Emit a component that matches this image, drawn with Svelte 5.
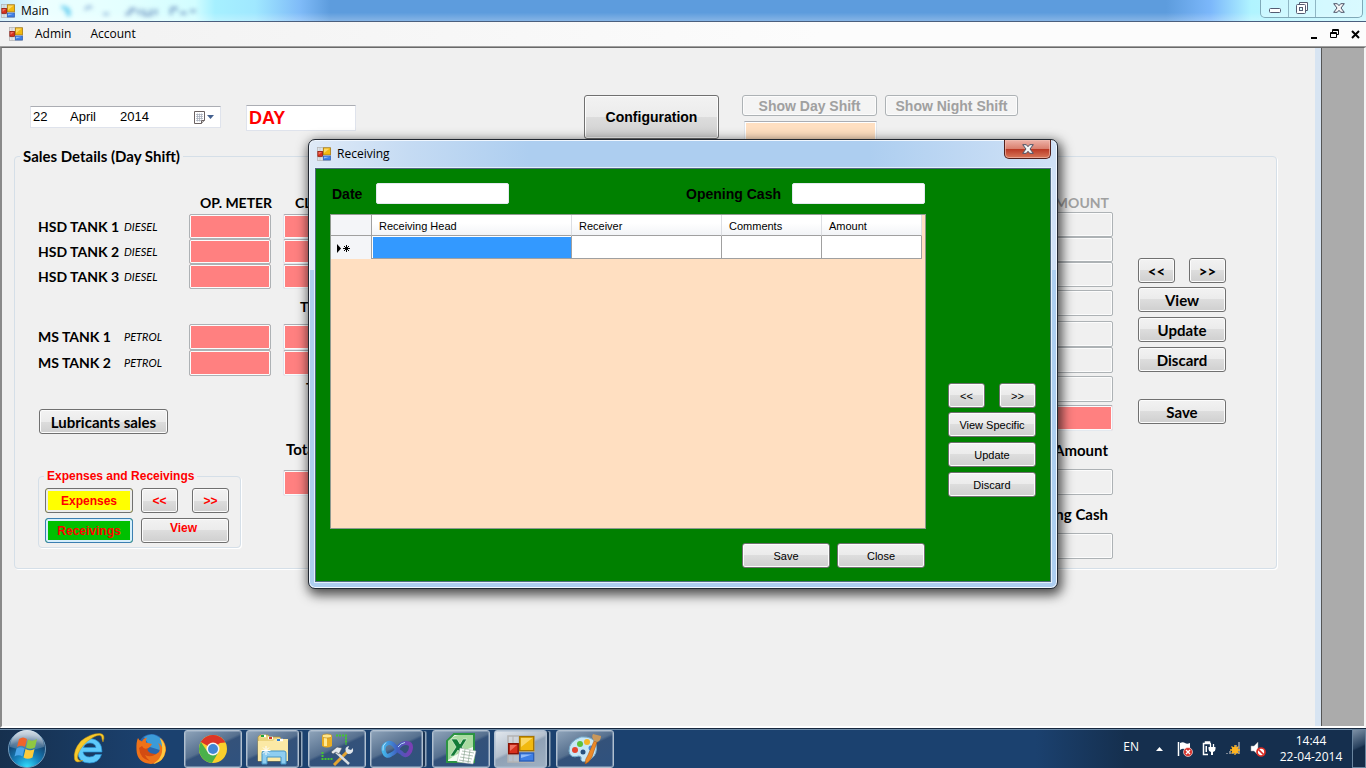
<script>
  const hsd = ['HSD TANK 1', 'HSD TANK 2', 'HSD TANK 3'];
  const ms = ['MS TANK 1', 'MS TANK 2'];
  const columns = ['Receiving Head', 'Receiver', 'Comments', 'Amount'];
  let date = $state('');
  let openingCash = $state('');
  let shift = $state('DAY');
</script>

{#snippet formIcon(size)}
  <svg class="icon" width={size} height={size} viewBox="0 0 28 28" aria-hidden="true">
    <rect x="1" y="1" width="26" height="26" fill="#dcdcdc" fill-opacity=".5" stroke="#b4b4b4" stroke-width="1.5" />
    <path d="M6 1v26M1 20h26M12 1v26" stroke="#b4b4b4" stroke-width="1" />
    <rect x="12.7" y="1.7" width="14" height="14" fill="#f2b90f" stroke="#a87600" stroke-width="1.4" />
    <path d="M14 3h11.5L14 12z" fill="#ffe48a" fill-opacity=".7" />
    <rect x="1.7" y="8.7" width="9.5" height="10" fill="#d8301c" stroke="#861105" stroke-width="1.4" />
    <path d="M3 10h7l-7 6z" fill="#ff9d8c" fill-opacity=".6" />
    <rect x="12.7" y="18" width="14" height="8" fill="#3e7fe6" stroke="#2c5fb8" stroke-width="1.4" />
    <path d="M14 19.500h11L14 23z" fill="#b7d5ff" fill-opacity=".7" />
  </svg>
{/snippet}

{#snippet crossGlyph()}
  <svg width="12" height="10" viewBox="0 0 12 10" aria-hidden="true">
    <path d="M.7 .7h3.600L6 2.700 7.700 .7h3.600L8 5l3.300 4.300H7.700L6 7.300 4.300 9.300H.7L4 5z" fill="#f6f6f6" stroke="#4b5266" stroke-width="1" />
  </svg>
{/snippet}

{#snippet arrows()}
  <div class="pair">
    <button class="btn">&lt;&lt;</button>
    <button class="btn">&gt;&gt;</button>
  </div>
{/snippet}

<div class="desktop">
  <header class="titlebar">
    {@render formIcon(14)}
    <span class="caption">Main</span>
    <svg class="haze" width="150" height="20" viewBox="0 0 150 20" aria-hidden="true">
      <path d="M12 6q10 0 8 9M16 7l4 8" stroke="#56c8ee" stroke-width="3" fill="none" />
      <path d="M36 9q3-5 7-2M54 13h6" stroke="#8fb4d8" stroke-width="3" fill="none" />
      <path d="M76 13h4M81 8v6m0-6h4v3M90 8v6M95 8v6h7V8M107 8v6M122 7v7m0-7h5v3M131 12h5v2M141 10h6" stroke="#7d9fc8" stroke-width="3" fill="none" />
    </svg>
    <div class="winbtns">
      <button aria-label="Minimize">
        <svg width="14" height="12" viewBox="0 0 14 12"><rect x="1.500" y="6.500" width="11" height="4" rx="1" fill="#fff" stroke="#555c72" /></svg>
      </button>
      <button aria-label="Restore">
        <svg width="12" height="12" viewBox="0 0 12 12"><path d="M3.500 2.500v-2h8v8h-2" fill="#fff" stroke="#555c72" /><rect x=".5" y="2.500" width="9" height="9" rx="1" fill="#fff" stroke="#555c72" /><rect x="3.500" y="5.500" width="3" height="3" fill="#dff" stroke="#555c72" /></svg>
      </button>
      <button class="wide" aria-label="Close">{@render crossGlyph()}</button>
    </div>
  </header>

  <nav class="menubar">
    {@render formIcon(14)}
    <button>Admin</button>
    <button>Account</button>
    <div class="childbtns">
      <button aria-label="Minimize child"><svg width="8" height="10" viewBox="0 0 8 10"><path d="M1 8h6v2H1z" /></svg></button>
      <button aria-label="Restore child"><svg width="9" height="10" viewBox="0 0 9 10"><path d="M2.500 3V.5h6v5H7M2 1.500h7M.5 3.500h6v5h-6zM0 4.500h7" fill="none" stroke="#000" /></svg></button>
      <button aria-label="Close child"><svg width="9" height="9" viewBox="0 0 9 9"><path d="M1 1l7 7M8 1L1 8" stroke="#000" stroke-width="2" /></svg></button>
    </div>
  </nav>

  <div class="workspace">
    <main class="form">
      <div class="top">
        <div class="datepick" role="group" aria-label="Sales date">
          <input class="day" aria-label="Day" value="22" />
          <input class="month" aria-label="Month" value="April" />
          <input class="year" aria-label="Year" value="2014" />
          <button aria-label="Open calendar">
            <svg width="21" height="13" viewBox="0 0 21 13">
              <path d="M.5 .5h10v9l-3 3h-7z" fill="#fff" stroke="#6b6262" />
              <path d="M2 3.500h7M2 5.500h7M2 7.500h7M2 9.500h5M3.500 2.500v8M5.500 2.500v8M7.500 2.500v6" stroke="#a9b0bd" stroke-width=".8" />
              <path d="M7.500 12.500v-3h3" fill="#ccc" stroke="#6b6262" />
              <path d="M13 4h7l-3.500 4z" fill="#44608f" />
            </svg>
          </button>
        </div>
        <input class="shift" aria-label="Shift" bind:value={shift} />
        <button class="btn config">Configuration</button>
        <div class="dayshift">
          <button class="btn off" disabled>Show Day Shift</button>
          <input class="peach" aria-label="Day shift value" />
        </div>
        <button class="btn off night" disabled>Show Night Shift</button>
      </div>

      <fieldset class="sales">
        <legend>Sales Details (Day Shift)</legend>
        <div class="cols">
          <div class="left">
            <div class="head">OP. METER</div>
            {#each hsd as name, i}
              <div class="tank">
                <label for="hsd{i}">{name}</label><i>DIESEL</i><input id="hsd{i}" class="box pink" />
              </div>
            {/each}
            <div class="break"></div>
            {#each ms as name, i}
              <div class="tank tall">
                <label for="ms{i}">{name}</label><i>PETROL</i><input id="ms{i}" class="box pink" />
              </div>
            {/each}
            <button class="btn lub">Lubricants sales</button>
            <fieldset class="exp">
              <legend>Expenses and Receivings</legend>
              <div class="expgrid">
                <button class="btn yellow">Expenses</button>
                {@render arrows()}
                <button class="btn green">Receivings</button>
                <button class="btn high">View</button>
              </div>
            </fieldset>
          </div>

          <div class="closing">
            <div class="head">CL</div>
            {#each hsd as name}
              <input class="box pink soft" aria-label="{name} closing" />
            {/each}
            <div class="sub">T</div>
            {#each ms as name}
              <input class="box pink soft tallbox" aria-label="{name} closing" />
            {/each}
            <div class="sub second">T</div>
            <label class="sub third" for="total">Total</label>
            <input id="total" class="box pink soft tallbox" />
          </div>

          <div class="amounts">
            <div class="head gray">AMOUNT</div>
            {#each hsd as name}
              <input class="box" aria-label="{name} amount" />
            {/each}
            <input class="box tallbox gap" aria-label="Diesel amount" />
            <input class="box tallbox gap wide" aria-label="Petrol 1 amount" />
            <input class="box tallbox" aria-label="Petrol 2 amount" />
            <input class="box tallbox gap" aria-label="Petrol amount" />
            <input class="box tallbox pink soft gap" aria-label="Lubricants amount" />
            <label for="net">Amount</label>
            <input id="net" class="box tallbox" />
            <label for="cash">Closing Cash</label>
            <input id="cash" class="box tallbox" />
          </div>

          <div class="actions">
            {@render arrows()}
            <button class="btn">View</button>
            <button class="btn">Update</button>
            <button class="btn">Discard</button>
            <button class="btn last">Save</button>
          </div>
        </div>
      </fieldset>
    </main>
  </div>

  <div class="overlay">
    <div class="dialog" role="dialog" aria-labelledby="dlg">
      <div class="dlghead">
        {@render formIcon(14)}
        <span class="caption" id="dlg">Receiving</span>
        <button class="redclose" aria-label="Close dialog">{@render crossGlyph()}</button>
      </div>
      <div class="dlgbody">
        <div class="sheet">
          <div class="fields">
            <label for="date">Date</label>
            <input id="date" bind:value={date} />
            <label class="oc" for="oc">Opening Cash</label>
            <input id="oc" bind:value={openingCash} />
          </div>
          <div class="gridbox">
            <table>
              <colgroup><col class="c0" /><col class="c1" /><col class="c2" /><col class="c3" /><col class="c3" /></colgroup>
              <thead>
                <tr><th class="corner"></th>{#each columns as c}<th>{c}</th>{/each}</tr>
              </thead>
              <tbody>
                <tr>
                  <th class="rowhead">
                    <svg width="14" height="9" viewBox="0 0 14 9" aria-label="New row"><path d="M0 0l4 4.500L0 9z" /><path d="M9.500 1v7M6 4.500h7M7 2l5 5M12 2L7 7" stroke="#000" /></svg>
                  </th>
                  {#each columns as c, i}<td class:sel={i === 0}></td>{/each}
                </tr>
              </tbody>
            </table>
          </div>
          <div class="foot">
            <button class="btn">Save</button>
            <button class="btn">Close</button>
          </div>
        </div>
        <div class="side">
          {@render arrows()}
          <button class="btn">View Specific</button>
          <button class="btn">Update</button>
          <button class="btn">Discard</button>
        </div>
      </div>
    </div>
  </div>

  <footer class="taskbar">
    <button class="plain start" aria-label="Start">
      <svg width="40" height="40" viewBox="0 0 40 40">
        <defs>
          <radialGradient id="orb" cx=".5" cy="1" r=".9"><stop offset="0" stop-color="#35e2ff" /><stop offset=".4" stop-color="#1682bd" /><stop offset=".8" stop-color="#134573" /><stop offset="1" stop-color="#5f7f9d" /></radialGradient>
          <linearGradient id="gloss" x2="0" y2="1"><stop offset="0" stop-color="#fff" stop-opacity=".75" /><stop offset="1" stop-color="#fff" stop-opacity=".12" /></linearGradient>
        </defs>
        <circle cx="20" cy="20" r="18.500" fill="url(#orb)" stroke="#6f9abc" />
        <path d="M3 18a17 17 0 0134 0q-17 6-34 0z" fill="url(#gloss)" />
        <path d="M12 10q4-3 8 0l-2 8q-4-2.500-8 0z" fill="#f0642a" />
        <path d="M21 10.500q4 2.500 9-.5l-2 8.500q-5 2.500-9 0z" fill="#8fc742" />
        <path d="M9.500 19.500q4-2.500 8 0l-2 8q-4-2.500-8 0z" fill="#4aa5e8" />
        <path d="M18.500 20q4.500 2.500 9 0l-2 8.500q-5 2.500-9 0z" fill="#fccb3b" />
      </svg>
    </button>
    <button class="plain ie" aria-label="Internet Explorer">
      <svg width="34" height="34" viewBox="0 0 34 34">
        <path d="M30 20H11q1 5 6.500 5 4 0 6-2.500h6Q27 31 17.500 31 6 31 5.500 19 6 7 17.500 6.500 30 7 30 20zM11.500 15.500H24q-1-4.500-6-4.500t-6.500 4.500z" fill="#5ec9fa" stroke="#278fd3" stroke-width=".7" />
        <path d="M9 9q-8 9-6.500 18 1 5 8.500 1.500Q4 30 6 22 10 12 20 6t10 1l1 3q3-8-3-8.500Q19 1 9 9z" fill="#f7c92b" stroke="#c8920d" stroke-width=".5" />
      </svg>
    </button>
    <button class="plain ff" aria-label="Firefox">
      <svg width="32" height="32" viewBox="0 0 32 32">
        <circle cx="16.500" cy="14.500" r="13.500" fill="#2a66ae" />
        <path d="M9 4q9-6 17 2 4 5 2 12L15 14z" fill="#3b9bd9" />
        <path d="M3 5q1 3 4 3.500 1-3 5-4-2 3-1 5l6 1.500q-2 4-5 5-1 4 3 6 5 1 9-3 2-5-1-9 3 1 4 4 1-5-1-9 5 5 5 12Q29 30 16 31 2 30 1.500 17 1 9 3 5z" fill="#ee7219" />
        <path d="M24.500 4.500q6 5 6 13Q29 29 18 31q8-5 9-12 1-8-2.500-14.500z" fill="#fdc840" />
        <path d="M4 15q1 11 11 13-4-3-5-6 6 3 11-1-6 0-8-3-1-2 0-3-4 2-6-2z" fill="#d34c12" />
      </svg>
    </button>
    <button class="task" aria-label="Chrome">
      <svg width="30" height="30" viewBox="0 0 30 30">
        <circle cx="15" cy="15" r="14" fill="#f9cf2c" />
        <path d="M15 15L2.900 8A14 14 0 0127.100 8L22 9z" fill="#dc3527" />
        <path d="M15 15L9 17 2.900 8A14 14 0 0014 29l6-10z" fill="#4ab14b" />
        <path d="M2.900 8A14 14 0 0127.100 8.500H15z" fill="#dc3527" />
        <circle cx="15" cy="15" r="6.500" fill="#f6f6f6" /><circle cx="15" cy="15" r="5" fill="#4287d6" />
      </svg>
    </button>
    <button class="task stack" aria-label="Explorer">
      <svg width="34" height="32" viewBox="0 0 34 32">
        <path d="M2 4l2-2h8l2 2h10l1 3h6v21H2z" fill="#ecd47d" stroke="#b99635" stroke-width=".7" />
        <path d="M2 8h15l2-2h13v22H2z" fill="#fbe9a5" />
        <path d="M5 3h5M12 5h5M21 7h6" stroke="#fff" stroke-width="2.500" /><path d="M5 3h3" stroke="#20a838" stroke-width="2" /><path d="M13 5h3" stroke="#d33928" stroke-width="2" /><path d="M21 7h3" stroke="#2a7dd5" stroke-width="2" />
        <path d="M6 31V20q0-2 2-2h20q2 0 2 2v11h-5v-7H11v7z" fill="#8ecdf0" stroke="#4594c5" />
        <path d="M10 13v9M5.500 17.500h9M7 14.500l6 6M13 14.500l-6 6" stroke="#fff" stroke-width="1" />
      </svg>
    </button>
    <button class="task" aria-label="Database tools">
      <svg width="34" height="34" viewBox="0 0 34 34">
        <path d="M2 4v10q5 3 10 0V4z" fill="#e9ad24" /><path d="M4 5v9h3V5z" fill="#ffe993" /><ellipse cx="7" cy="4" rx="5" ry="2" fill="#ffe58a" stroke="#b37f11" stroke-width=".6" />
        <path d="M16 3.500h10v9M2.500 20v7h11" fill="none" stroke="#45c531" stroke-width="2" stroke-dasharray="2 1" />
        <path d="M14 33l13-13" stroke="#e3a432" stroke-width="3" /><path d="M26 20q-2-5 3-6l-1 3 3 1 2-2q1 6-5 6z" fill="#e0e5ea" />
        <path d="M16 20l13 12" stroke="#d9dde1" stroke-width="2.500" /><path d="M11 20l6-5 5 1-3 6-3-2-3 2z" fill="#e6eaee" stroke="#4d5561" stroke-width=".6" />
      </svg>
    </button>
    <button class="task stack" aria-label="Visual Studio">
      <svg width="32" height="22" viewBox="0 0 32 22">
        <defs><linearGradient id="loop"><stop offset="0" stop-color="#43b4ea" /><stop offset=".5" stop-color="#3f5fc0" /><stop offset="1" stop-color="#7a3fb4" /></linearGradient></defs>
        <path d="M16 11Q11 3 6 5.500T3 14t7 2.500Q14 15 17 10t8-5 5 4-3 7-7-1.500Q18 14 16 11z" fill="none" stroke="url(#loop)" stroke-width="4" />
        <path d="M5 4.500q-4 3-3 8M17 9q3-4 7-4.500" fill="none" stroke="#b6dcf8" stroke-width="1" />
      </svg>
    </button>
    <button class="task" aria-label="Excel">
      <svg width="32" height="32" viewBox="0 0 32 32">
        <path d="M2 8l7-7h20v28H2z" fill="#f4fbf2" stroke="#2c9443" stroke-width="2" />
        <path d="M3 8q6-6 11-6H28v12Q16 18 3 27z" fill="#a9dba0" />
        <path d="M6 6h6l3 5 3-5h4l-5 8 6 9h-6l-4-6-4 6H5l6-9z" fill="#137b37" stroke="#eefaea" stroke-width=".6" />
        <path d="M15 15l16 3-3 13-16-2z" fill="#fff" stroke="#a9b1ae" stroke-width=".5" /><path d="M17 18l12 2M16 21l12 2M15 24l12 2M14 27l12 2M20 16l-2 13M25 17l-2 13" stroke="#8fa895" stroke-width=".7" />
      </svg>
    </button>
    <button class="task stack active" aria-label="Main form">{@render formIcon(28)}</button>
    <button class="task" aria-label="Paint">
      <svg width="34" height="32" viewBox="0 0 34 32">
        <path d="M1 18q0-10 12-14 12-1 15 7 2 10-5 15-8 5-10 1 1-4-2-4-9 3-10-5z" fill="#c7e7f7" stroke="#78aecd" />
        <circle cx="7" cy="17" r="3" fill="#e4452f" /><circle cx="12" cy="11" r="3" fill="#5dc13b" /><circle cx="19" cy="9" r="3" fill="#f5b627" /><circle cx="15" cy="19" r="2.500" fill="#28517e" /><circle cx="23" cy="15" r="2.500" fill="#4a8bdd" />
        <path d="M17 31q0-5 3-9l6-14 3 1-5 15q-3 6-7 7z" fill="#ec8a28" stroke="#9e4f12" stroke-width=".5" />
        <path d="M26 8q-3-4-1-7l4 1 4 1q0 5-4 6z" fill="#c9985b" />
      </svg>
    </button>
    <div class="tray">
      <span class="lang">EN</span>
      <svg width="7" height="4" viewBox="0 0 7 4"><path d="M0 4l3.500-4L7 4z" fill="#fff" /></svg>
      <svg class="flag" width="16" height="16" viewBox="0 0 16 16"><path d="M1.500 1v14" stroke="#fff" stroke-width="1.500" /><path d="M3 2q3-1.500 5 0t5 0v7q-3 1-5-.500t-5 .500z" fill="#fff" /><circle cx="11" cy="11" r="4.500" fill="#d8322b" stroke="#fff" stroke-width=".6" /><path d="M9 9l4 4M13 9l-4 4" stroke="#fff" stroke-width="1.400" /></svg>
      <svg width="14" height="15" viewBox="0 0 14 15"><path d="M6 13.500H1.500v-11H3M8 2.500h1M3.500 2.500v-1.500h4v1.500z" fill="none" stroke="#fff" stroke-width="1.500" /><path d="M3.500 5h1.500v6H3.500z" fill="#fff" /><path d="M8.500 3v3M11.500 3v3" stroke="#fff" stroke-width="1.300" /><path d="M6.500 6h7v2q0 2.500-2.500 3v3H9v-3q-2.500-.5-2.500-3z" fill="#fff" /></svg>
      <svg width="16" height="15" viewBox="0 0 16 15"><path d="M1 13h2v-1H1zM4 13h2v-3H4zM7 13h2V7H7zM10 13h2V4h-2zM13 13h2V1h-2z" fill="#7b8593" /><circle cx="10" cy="9" r="3.200" fill="#ffb420" /><path d="M10 4v10M5 9h10M6.500 5.500l7 7M13.500 5.500l-7 7" stroke="#ffb420" stroke-width="1.300" /></svg>
      <svg width="16" height="16" viewBox="0 0 16 16"><path d="M1 5h3l4-4v13l-4-4H1z" fill="#fff" stroke="#999" stroke-width=".5" /><circle cx="11" cy="11" r="4" fill="#fff" stroke="#dc2d25" stroke-width="1.700" /><path d="M8.500 8.500l5 5" stroke="#dc2d25" stroke-width="1.700" /></svg>
      <div class="clock"><span>14:44</span><span>22-04-2014</span></div>
      <button class="peek" aria-label="Show desktop"></button>
    </div>
  </footer>
</div>

<style>
  .desktop {
    position: relative;
    min-height: 100vh;
    display: flex;
    flex-direction: column;
    background: #f0f0f0;
    color: #000;
    font: 12px/16px "Open Sans", "Noto Sans", sans-serif;
    overflow: hidden;
  }
  .desktop :is(button, input) {
    box-sizing: border-box;
    margin: 0;
    padding: 0;
    font: inherit;
    color: inherit;
    border-radius: 0;
    border: 0;
    background: none;
  }
  svg { display: block; flex: none; }
  .caption { font-size: 12px; }

  .titlebar {
    height: 22px;
    box-sizing: border-box;
    display: flex;
    align-items: center;
    gap: 6px;
    padding-left: 1px;
    border-bottom: 1px solid #4a5f7e;
    background:
      linear-gradient(180deg, transparent 60%, #ffffff40),
      linear-gradient(90deg, #c9ecfa 0, #edffff 40px, #e4ffff 120px, #d2fdff 195px, #a6f0ff 215px, #a0e8ff 255px, #7fbbf8 300px, #5d9cdd 330px, #5d9cdd calc(100% - 200px), #7cb8fb calc(100% - 155px), #b0f4ff calc(100% - 115px), #c9f8ff);
  }
  .haze { filter: blur(2px); margin-left: -6px; opacity: .8; }
  .winbtns {
    align-self: flex-start;
    display: flex;
    margin-left: auto;
    margin-right: 3px;
    height: 18px;
    box-sizing: border-box;
    border: 1px solid #7fa9b8;
    border-top: 0;
    border-radius: 0 0 5px 5px;
    background: #ffffff50;
  }
  .winbtns button { width: 27px; display: flex; justify-content: center; align-items: center; padding-bottom: 2px; }
  .winbtns button + button { border-left: 1px solid #8fb6c4; }
  .winbtns .wide:last-child { width: 47px; }

  .menubar {
    height: 24px;
    display: flex;
    align-items: center;
    padding: 0 6px 0 9px;
    background: linear-gradient(90deg, #f1f1f1, #fcfcfc 60%);
    border-bottom: 1px solid #a0a0a0;
  }
  .menubar > button { margin-left: 12px; }
  .menubar > button + button { margin-left: 19px; }
  .childbtns { margin-left: auto; display: flex; gap: 12px; align-items: center; }

  .workspace {
    flex: 1;
    display: flex;
    background: #ababab;
    border: 1px solid #696969;
    border-left: 2px solid #8a8a8a;
    border-right: 2px solid #f4f4f4;
    border-bottom: 2px solid #fff;
    padding-right: 42px;
  }
  .form {
    flex: 1;
    background: #f0f0f0;
    border-right: 1px solid #555;
    box-shadow: inset -6px 0 #d7e4f2;
    padding: 47px 44px 0 12px;
    font-family: Lato, "Open Sans", sans-serif;
  }
  .top { display: flex; align-items: flex-start; height: 52px; padding-left: 16px; font-family: "Liberation Sans", Arial, sans-serif; }
  .datepick {
    display: flex;
    align-items: center;
    width: 191px;
    height: 22px;
    box-sizing: border-box;
    margin-top: 11px;
    border: 1px solid #dfe3ec;
    border-top-color: #abadb3;
    background: #fff;
    font-size: 13px;
  }
  .desktop .datepick input { padding-left: 2px; }
  .datepick .day { width: 37px; }
  .datepick .month { width: 50px; }
  .datepick .year { width: 60px; }
  .datepick button { margin-left: auto; margin-right: 5px; }
  .desktop .shift {
    width: 110px;
    height: 26px;
    margin: 10px 0 0 25px;
    padding-left: 2px;
    border: 1px solid #dfe3ec;
    border-top-color: #abadb3;
    background: #fff;
    color: #f00;
    font-size: 18px;
    font-weight: 700;
  }

  .desktop .btn {
    height: 25px;
    border: 1px solid #707070;
    border-radius: 3px;
    background: linear-gradient(#f2f2f2, #ebebeb 50%, #dddddd 50%, #cfcfcf);
    box-shadow: inset 0 0 0 1px #fcfcfc;
    text-align: center;
    white-space: nowrap;
  }
  .desktop .config { width: 135px; height: 44px; margin-left: 228px; font-size: 14px; font-weight: 700; }
  .dayshift { width: 136px; margin-left: 23px; display: flex; flex-direction: column; gap: 5px; align-items: flex-start; }
  .desktop .off { width: 135px; height: 21px; border-color: #adb2b5; background: #f4f4f4; color: #a0a0a0; font-size: 14px; font-weight: 700; }
  .desktop .night { width: 133px; margin-left: 7px; }
  .desktop .peach { width: 133px; height: 26px; margin-left: 2px; border: 1px solid #e0e4ea; border-top-color: #abadb3; background: #ffdfc1; box-shadow: inset 0 0 0 1px #fff; }

  fieldset { min-width: 0; margin: 0; padding: 0; border: 1px solid #d5dfe8; border-radius: 4px; box-shadow: 1px 1px #fff; }
  .sales { height: 422px; box-sizing: border-box; font-size: 14px; line-height: 18px; font-weight: 700; }
  .sales > legend { margin-left: 5px; padding: 0 3px; font-size: 15px; }
  .cols { display: flex; padding: 28px 50px 0 23px; }
  .head { height: 20px; line-height: 20px; }
  .left { width: 233px; }
  .left .head { padding-left: 162px; margin-bottom: 1px; white-space: nowrap; }
  .tank { display: grid; grid-template-columns: 86px 65px 82px; align-items: center; height: 25px; }
  .tank i { font-size: 11px; font-weight: 400; }
  .tall { height: 26px; }
  .break { height: 35px; }
  .desktop .box { width: 82px; height: 25px; border: 1px solid #adb2b5; border-radius: 2px; box-shadow: inset 0 0 0 1px #fcfcfc; background: #f0f0f0; display: block; }
  .desktop .tallbox, .desktop .tall .box { height: 26px; }
  .desktop .pink { background: #ff8080; }
  .desktop .soft { border-color: #abadb3 #e2e3ea #e3e9ef #dfe3ec; }
  .desktop .lub { display: block; width: 129px; margin: 33px 0 0 1px; font-size: 15px; }
  .exp { width: 203px; height: 80px; box-sizing: border-box; margin-top: 34px; color: #f00; font-family: "Liberation Sans", Arial, sans-serif; font-size: 12px; line-height: 16px; }
  .exp legend { margin-left: 5px; padding: 0 3px; }
  .expgrid { display: grid; grid-template-columns: 88px 88px; column-gap: 8px; row-gap: 5px; padding: 4px 0 0 6px; }
  .pair { display: flex; justify-content: space-between; }
  .pair .btn { width: 37px; }
  .desktop .yellow { background: #ff0; box-shadow: inset 0 0 0 2px #ececec; }
  .desktop .green { background: #00c000; border-color: #3c7fb1; box-shadow: inset 0 0 0 2px #d5eefc; }
  .desktop .high { padding: 0 3px 5px 0; }

  .closing { margin-left: 12px; width: 82px; }
  .closing .head { padding-left: 12px; margin-bottom: 1px; white-space: nowrap; }
  .sub { height: 35px; line-height: 35px; padding-left: 17px; box-sizing: border-box; }
  .second { height: 24px; line-height: 24px; padding-left: 23px; }
  .third { display: block; height: 70px; line-height: 98px; padding-left: 3px; font-size: 15px; }
  .amounts { margin-left: auto; width: 82px; }
  .amounts .head { text-align: right; padding-right: 4px; margin-bottom: -1px; }
  .gray { color: #a0a0a0; }
  .desktop .amounts .gap { margin-top: 3px; }
  .desktop .amounts .gap.wide { margin-top: 5px; }
  .amounts label { display: block; height: 38px; line-height: 38px; font-size: 15px; text-align: right; padding-right: 5px; white-space: nowrap; direction: rtl; }
  .actions { margin-left: 25px; width: 88px; padding-top: 65px; display: flex; flex-direction: column; gap: 5px; font-size: 15px; }
  .actions .pair, .side .pair { margin-bottom: -1px; }
  .actions .last { margin-top: 22px; }

  .overlay { position: absolute; inset: 139px 0 auto; display: flex; justify-content: center; pointer-events: none; }
  .dialog {
    pointer-events: auto;
    width: 750px;
    height: 450px;
    box-sizing: border-box;
    display: flex;
    flex-direction: column;
    padding: 0 6px 6px;
    border: 1px solid #222831;
    border-radius: 7px;
    background:
      linear-gradient(90deg, #dfeaf7 0, #c5dbf3 100px, transparent 220px, transparent 560px, #cfe1f6 740px) top / 100% 130px no-repeat,
      #adcef0;
    box-shadow: inset 0 0 0 1px #f0f7ff, 2px 4px 12px 2px #000000b0;
  }
  .dlghead { height: 28px; display: flex; align-items: center; gap: 6px; padding-left: 2px; }
  .desktop .redclose {
    align-self: flex-start;
    margin-left: auto;
    width: 47px;
    height: 19px;
    display: flex;
    justify-content: center;
    align-items: center;
    border: 1px solid #52201c;
    border-top: 0;
    border-radius: 0 0 5px 5px;
    background: linear-gradient(#eeb3a9, #d9806f 48%, #bb3a26 52%, #d8785a);
    box-shadow: inset 0 0 0 1px #f2c0b4a0;
  }
  .dlgbody {
    flex: 1;
    display: flex;
    justify-content: space-between;
    padding: 14px 14px 0 14px;
    background: #008000;
    border: 1px solid #4e6a7e;
    outline: 1px solid #e3effb;
    font-family: "Liberation Sans", Arial, sans-serif;
  }
  .sheet { width: 596px; }
  .fields { display: flex; align-items: center; font-size: 14px; font-weight: 700; height: 21px; padding: 0 1px 0 2px; }
  .fields label { min-width: 33px; }
  .desktop .fields input { width: 133px; height: 21px; margin-left: 11px; background: #fff; border: 1px solid #e3e9ef; border-radius: 2px; }
  .fields .oc { margin-left: auto; }
  .gridbox { height: 315px; box-sizing: border-box; margin-top: 10px; border: 1px solid #8f9a8f; background: #ffdfc1; overflow: hidden; }
  table { width: 591px; border-collapse: separate; border-spacing: 0; table-layout: fixed; font-size: 11px; }
  .c0 { width: 41px; }
  .c1 { width: 200px; }
  .c2 { width: 150px; }
  .c3 { width: 100px; }
  th { height: 21px; padding: 1px 0 0 7px; text-align: left; font-weight: 400; background: linear-gradient(#fff 40%, #f2f4f7); border-right: 1px solid #dcdee2; border-bottom: 1px solid #a0a0a0; box-sizing: border-box; line-height: 18px; }
  .corner, .rowhead { background: #f4f5f8; border-right-color: #a0a0a0; }
  .rowhead { border-bottom: 0; padding-left: 6px; }
  td { height: 23px; padding: 0; background: #fff; border: 1px solid #a0a0a0; border-width: 0 1px 1px 0; box-sizing: border-box; }
  .sel { background: #39f; box-shadow: inset 1px 1px #fff; }
  .foot { display: flex; justify-content: flex-end; gap: 7px; padding: 14px 1px 0 0; font-size: 11px; }
  .foot .btn { width: 88px; }
  .side { width: 88px; padding-top: 200px; display: flex; flex-direction: column; gap: 5px; font-size: 11px; }

  .taskbar {
    height: 40px;
    box-sizing: border-box;
    display: flex;
    align-items: center;
    gap: 4px;
    padding-left: 7px;
    border-top: 1px solid #16283e;
    box-shadow: inset 0 1px #6f8daa;
    background: linear-gradient(90deg, #16304e, #1b416f 150px, #1b416f calc(100% - 330px), #152f4e calc(100% - 240px));
  }
  .taskbar button { display: flex; justify-content: center; align-items: center; flex: none; }
  .taskbar .start { width: 40px; }
  .taskbar .ie { width: 76px; }
  .taskbar .ff { width: 40px; margin-right: 9px; }
  .desktop .task {
    width: 58px;
    height: 38px;
    border: 1px solid #b0bfcf;
    border-radius: 3px;
    box-shadow: inset 0 0 0 1px #a9bccf80;
    background: linear-gradient(155deg, #8fa4ba 0, #56708f 45%, #34527a 50%, #2f527f);
  }
  .desktop .stack { width: 53px; margin-right: 5px; box-shadow: inset 0 0 0 1px #a9bccf80, 3px 0 0 -1px #1b3453, 4px 0 0 -1px #93a7bd, 5px 0 0 -1px #5a7695; }
  .desktop .active { background: linear-gradient(155deg, #e3e8ee 0, #b4c0cd 45%, #8fa1b5 50%, #9fb0c2); }
  .tray { margin-left: auto; align-self: stretch; display: flex; align-items: center; gap: 9px; color: #fff; }
  .lang { margin-right: 8px; padding-bottom: 4px; }
  .flag { margin-left: 5px; }
  .clock { display: flex; flex-direction: column; align-items: center; width: 70px; margin-left: 1px; white-space: nowrap; }
  .desktop .peek { align-self: stretch; width: 14px; border: 1px solid #6a859f; margin-left: -3px; background: linear-gradient(155deg, #7d90a5, #29425f 45%, #152c48 50%); }
</style>
